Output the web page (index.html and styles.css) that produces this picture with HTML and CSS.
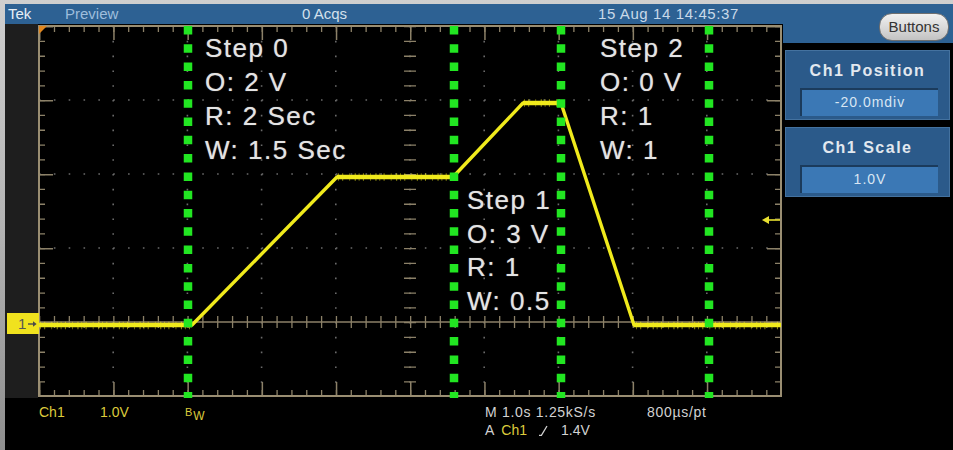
FILE: index.html
```html
<!DOCTYPE html>
<html lang="en">
<head>
<meta charset="utf-8">
<title>Tek Preview</title>
<link rel="stylesheet" href="styles.css">
</head>
<body>
<div class="scope">
  <div class="main">
    <div class="topbar">
      <span class="t-tek">Tek</span>
      <span class="t-mode">Preview</span>
      <span class="t-acq">0 Acqs</span>
      <span class="t-date">15 Aug 14 14:45:37</span>
    </div>
    <div class="screen">
      <div class="gutter">
        <div class="marker">1<svg class="marker-arrow" width="9" height="8" viewBox="0 0 9 8"><path d="M0 4H6" stroke="#4a4a4a" stroke-width="1.4"/><path d="M5 1.2L8.6 4L5 6.8Z" fill="#4a4a4a"/></svg></div>
      </div>
      <div class="plot">
        <svg class="grid" width="745" height="374" viewBox="0 0 745 374">
          <g stroke="#6a6a6a" stroke-width="1.6">
            <g stroke-dasharray="1.6 13.24">
              <line x1="1" y1="76" x2="743" y2="76"/>
              <line x1="1" y1="150" x2="743" y2="150"/>
              <line x1="1" y1="224" x2="743" y2="224"/>
            </g>
            <g stroke-dasharray="1.6 13.2">
              <line x1="75.2" y1="2" x2="75.2" y2="372"/>
              <line x1="149.4" y1="2" x2="149.4" y2="372"/>
              <line x1="223.6" y1="2" x2="223.6" y2="372"/>
              <line x1="297.8" y1="2" x2="297.8" y2="372"/>
              <line x1="372" y1="2" x2="372" y2="372"/>
              <line x1="446.2" y1="2" x2="446.2" y2="372"/>
              <line x1="520.4" y1="2" x2="520.4" y2="372"/>
              <line x1="594.6" y1="2" x2="594.6" y2="372"/>
              <line x1="668.8" y1="2" x2="668.8" y2="372"/>
            </g>
          </g>
          <g stroke="#8c8168">
            <line x1="1" y1="298" x2="743" y2="298" stroke-width="1.4"/>
            <line x1="1" y1="298" x2="743" y2="298" stroke-width="12" stroke-dasharray="1.3 13.54"/>
            <line x1="372" y1="2" x2="372" y2="372" stroke-width="12" stroke-dasharray="1.3 13.5"/>
            <line x1="4" y1="2" x2="4" y2="372" stroke-width="6" stroke-dasharray="1.3 13.5"/>
            <line x1="8" y1="2" x2="8" y2="372" stroke-width="14" stroke-dasharray="1.5 72.5"/>
            <line x1="740" y1="2" x2="740" y2="372" stroke-width="6" stroke-dasharray="1.3 13.5"/>
            <line x1="736" y1="2" x2="736" y2="372" stroke-width="14" stroke-dasharray="1.5 72.5"/>
            <line x1="1" y1="5" x2="743" y2="5" stroke-width="6" stroke-dasharray="1.3 13.54"/>
            <line x1="1" y1="9" x2="743" y2="9" stroke-width="14" stroke-dasharray="1.5 72.7"/>
            <line x1="1" y1="369" x2="743" y2="369" stroke-width="6" stroke-dasharray="1.3 13.54"/>
            <line x1="1" y1="365" x2="743" y2="365" stroke-width="14" stroke-dasharray="1.5 72.7"/>
            <rect x="1" y="2" width="742" height="370" fill="none" stroke="#9a8e72" stroke-width="2"/>
          </g>
          <path d="M1 2H9L1 10Z" fill="#e0861e"/>
          <g fill="none" stroke="#f0ea1c" stroke-linejoin="round">
            <polyline points="1,301 154,301 299,153 415,153 485,79 523,79 596,301 743,301" stroke-width="3.4"/>
            <g stroke-width="4.5">
              <line x1="1" y1="301" x2="154" y2="301"/>
              <line x1="299" y1="153" x2="415" y2="153"/>
              <line x1="485" y1="79" x2="523" y2="79"/>
              <line x1="596" y1="301" x2="743" y2="301"/>
            </g>
            <g stroke-width="7.5" stroke-dasharray="0.8 3.4 1 6.2 0.7 4.6 1.1 2.9" opacity="0.6">
              <line x1="2" y1="301.5" x2="152" y2="301.5"/>
              <line x1="300" y1="153" x2="414" y2="153"/>
              <line x1="486" y1="79" x2="522" y2="79"/>
              <line x1="598" y1="301.5" x2="742" y2="301.5"/>
            </g>
          </g>
          <g stroke="#e8e030" fill="#e8e030">
            <line x1="729" y1="196" x2="742" y2="196" stroke-width="1.6"/>
            <path d="M724 196L731 192V200Z" stroke="none"/>
          </g>
          <g stroke="#22e622" stroke-width="8.5" stroke-dasharray="8.5 9.8">
            <line x1="150" y1="2" x2="150" y2="374"/>
            <line x1="416" y1="2" x2="416" y2="374"/>
            <line x1="523" y1="2" x2="523" y2="374"/>
            <line x1="671" y1="2" x2="671" y2="374"/>
          </g>
        </svg>
        <div class="note note-0">Step 0<br>O: 2 V<br>R: 2 Sec<br>W: 1.5 Sec</div>
        <div class="note note-1">Step 1<br>O: 3 V<br>R: 1<br>W: 0.5</div>
        <div class="note note-2">Step 2<br>O: 0 V<br>R: 1<br>W: 1</div>
      </div>
    </div>
    <div class="footer">
      <span class="f-ch yel">Ch1</span>
      <span class="f-scale yel">1.0V</span>
      <span class="f-bw yel">B<sub>W</sub></span>
      <span class="f-time">M 1.0s 1.25kS/s</span>
      <span class="f-rate">800µs/pt</span>
      <span class="f-trig">A<span class="yel trig-ch">Ch1</span><svg class="slope" width="9" height="11" viewBox="0 0 9 11"><path d="M0 10.3H2.4L8 1" fill="none" stroke="#d0d0d0" stroke-width="1.3"/></svg><span>1.4V</span></span>
    </div>
  </div>
  <aside class="side">
    <div class="side-head"><button class="btn">Buttons</button></div>
    <div class="panel">
      <div class="panel-title">Ch1 Position</div>
      <div class="panel-value">-20.0mdiv</div>
    </div>
    <div class="panel">
      <div class="panel-title">Ch1 Scale</div>
      <div class="panel-value">1.0V</div>
    </div>
  </aside>
</div>
</body>
</html>
```

FILE: styles.css
```css
* { box-sizing: border-box; }

html, body {
  margin: 0;
  width: 953px;
  height: 450px;
  overflow: hidden;
}

body {
  background: linear-gradient(180deg, #cfcfcf 0%, #b4b4b4 50%, #8e8e8e 100%);
  font-family: "Liberation Sans", Arial, sans-serif;
}

.scope {
  display: grid;
  grid-template-columns: 778px 170px;
  margin: 4px 0 0 5px;
  height: 446px;
  background: #000;
}

.main {
  display: flex;
  flex-direction: column;
}

.topbar {
  display: flex;
  height: 20px;
  background: #2d6193;
  font-size: 15px;
  line-height: 20px;
  padding-left: 3px;
  white-space: nowrap;
}

.t-tek { width: 57px; color: #e6eef6; }
.t-mode { width: 237px; color: #9ebddc; }
.t-acq { width: 296px; color: #d4e0ec; }
.t-date { color: #c9d9e9; letter-spacing: 0.6px; }

.screen {
  display: flex;
  height: 374px;
}

.gutter {
  width: 33px;
  background: #1e1e1e;
  padding-top: 289px;
  position: relative;
  z-index: 1;
}

.marker {
  display: flex;
  align-items: center;
  width: 32px;
  height: 21px;
  margin-left: 2px;
  padding-left: 11px;
  background: #f0e21e;
  color: #555;
  font-size: 15px;
  line-height: 21px;
}

.marker-arrow { margin-left: 2px; }

.plot {
  position: relative;
  width: 745px;
  height: 374px;
  background: #000;
}

.grid { display: block; }

.note {
  position: absolute;
  color: #e4e4e4;
  font-size: 26px;
  letter-spacing: 1.5px;
  line-height: 34px;
  white-space: nowrap;
  text-shadow: 0 0 1px rgba(230, 230, 230, 0.6);
}

.note-0 { left: 167px; top: 7px; }
.note-2 { left: 562px; top: 7px; }
.note-1 { left: 429px; top: 160px; line-height: 33.5px; }

.footer {
  display: grid;
  grid-template-columns: 34px 61px 85px 300px 162px auto;
  grid-template-rows: 16px 16px;
  row-gap: 2px;
  padding-top: 6px;
  font-size: 14px;
  line-height: 16px;
  color: #d2d2d2;
  white-space: nowrap;
}

.yel { color: #dccb3c; }

.f-ch { grid-column: 2; grid-row: 1; }
.f-scale { grid-column: 3; grid-row: 1; }
.f-bw { grid-column: 4; grid-row: 1; font-size: 11px; }
.f-bw sub { font-size: 12px; vertical-align: -4px; margin-left: 1px; }
.f-time { grid-column: 5; grid-row: 1; letter-spacing: 0.7px; }
.f-rate { grid-column: 6; grid-row: 1; letter-spacing: 0.7px; }
.f-trig {
  grid-column: 5 / span 2;
  grid-row: 2;
  display: flex;
  align-items: center;
}
.trig-ch { margin-left: 7px; }
.slope { margin: 0 13px 0 12px; }

.side {
  display: flex;
  flex-direction: column;
  background: #000;
}

.side-head {
  display: flex;
  justify-content: flex-end;
  height: 39px;
  padding: 9px 4px 0 0;
  background: #2d6193;
}

.btn {
  width: 70px;
  height: 28px;
  padding: 0;
  border: 1px solid #6f6f6f;
  border-radius: 13px;
  background: linear-gradient(180deg, #f0f0f0 0%, #d6d6d6 60%, #c2c2c2 100%);
  color: #333;
  font-family: "Liberation Sans", Arial, sans-serif;
  font-size: 15px;
  line-height: 26px;
}

.panel {
  height: 70px;
  margin: 7px 3px 0 2px;
  padding-top: 9px;
  background: #2b5a8a;
  border: 1px solid #44729f;
}

.panel-title {
  text-align: center;
  color: #e2e8ef;
  font-size: 16px;
  font-weight: bold;
  letter-spacing: 1.5px;
  line-height: 22px;
}

.panel-value {
  height: 28px;
  margin: 6px 11px 0 14px;
  background: #3b78b5;
  border-top: 2px solid #1b3b5c;
  border-left: 2px solid #1b3b5c;
  text-align: center;
  color: #d8e6f3;
  font-size: 14px;
  letter-spacing: 1px;
  line-height: 25px;
}
```
